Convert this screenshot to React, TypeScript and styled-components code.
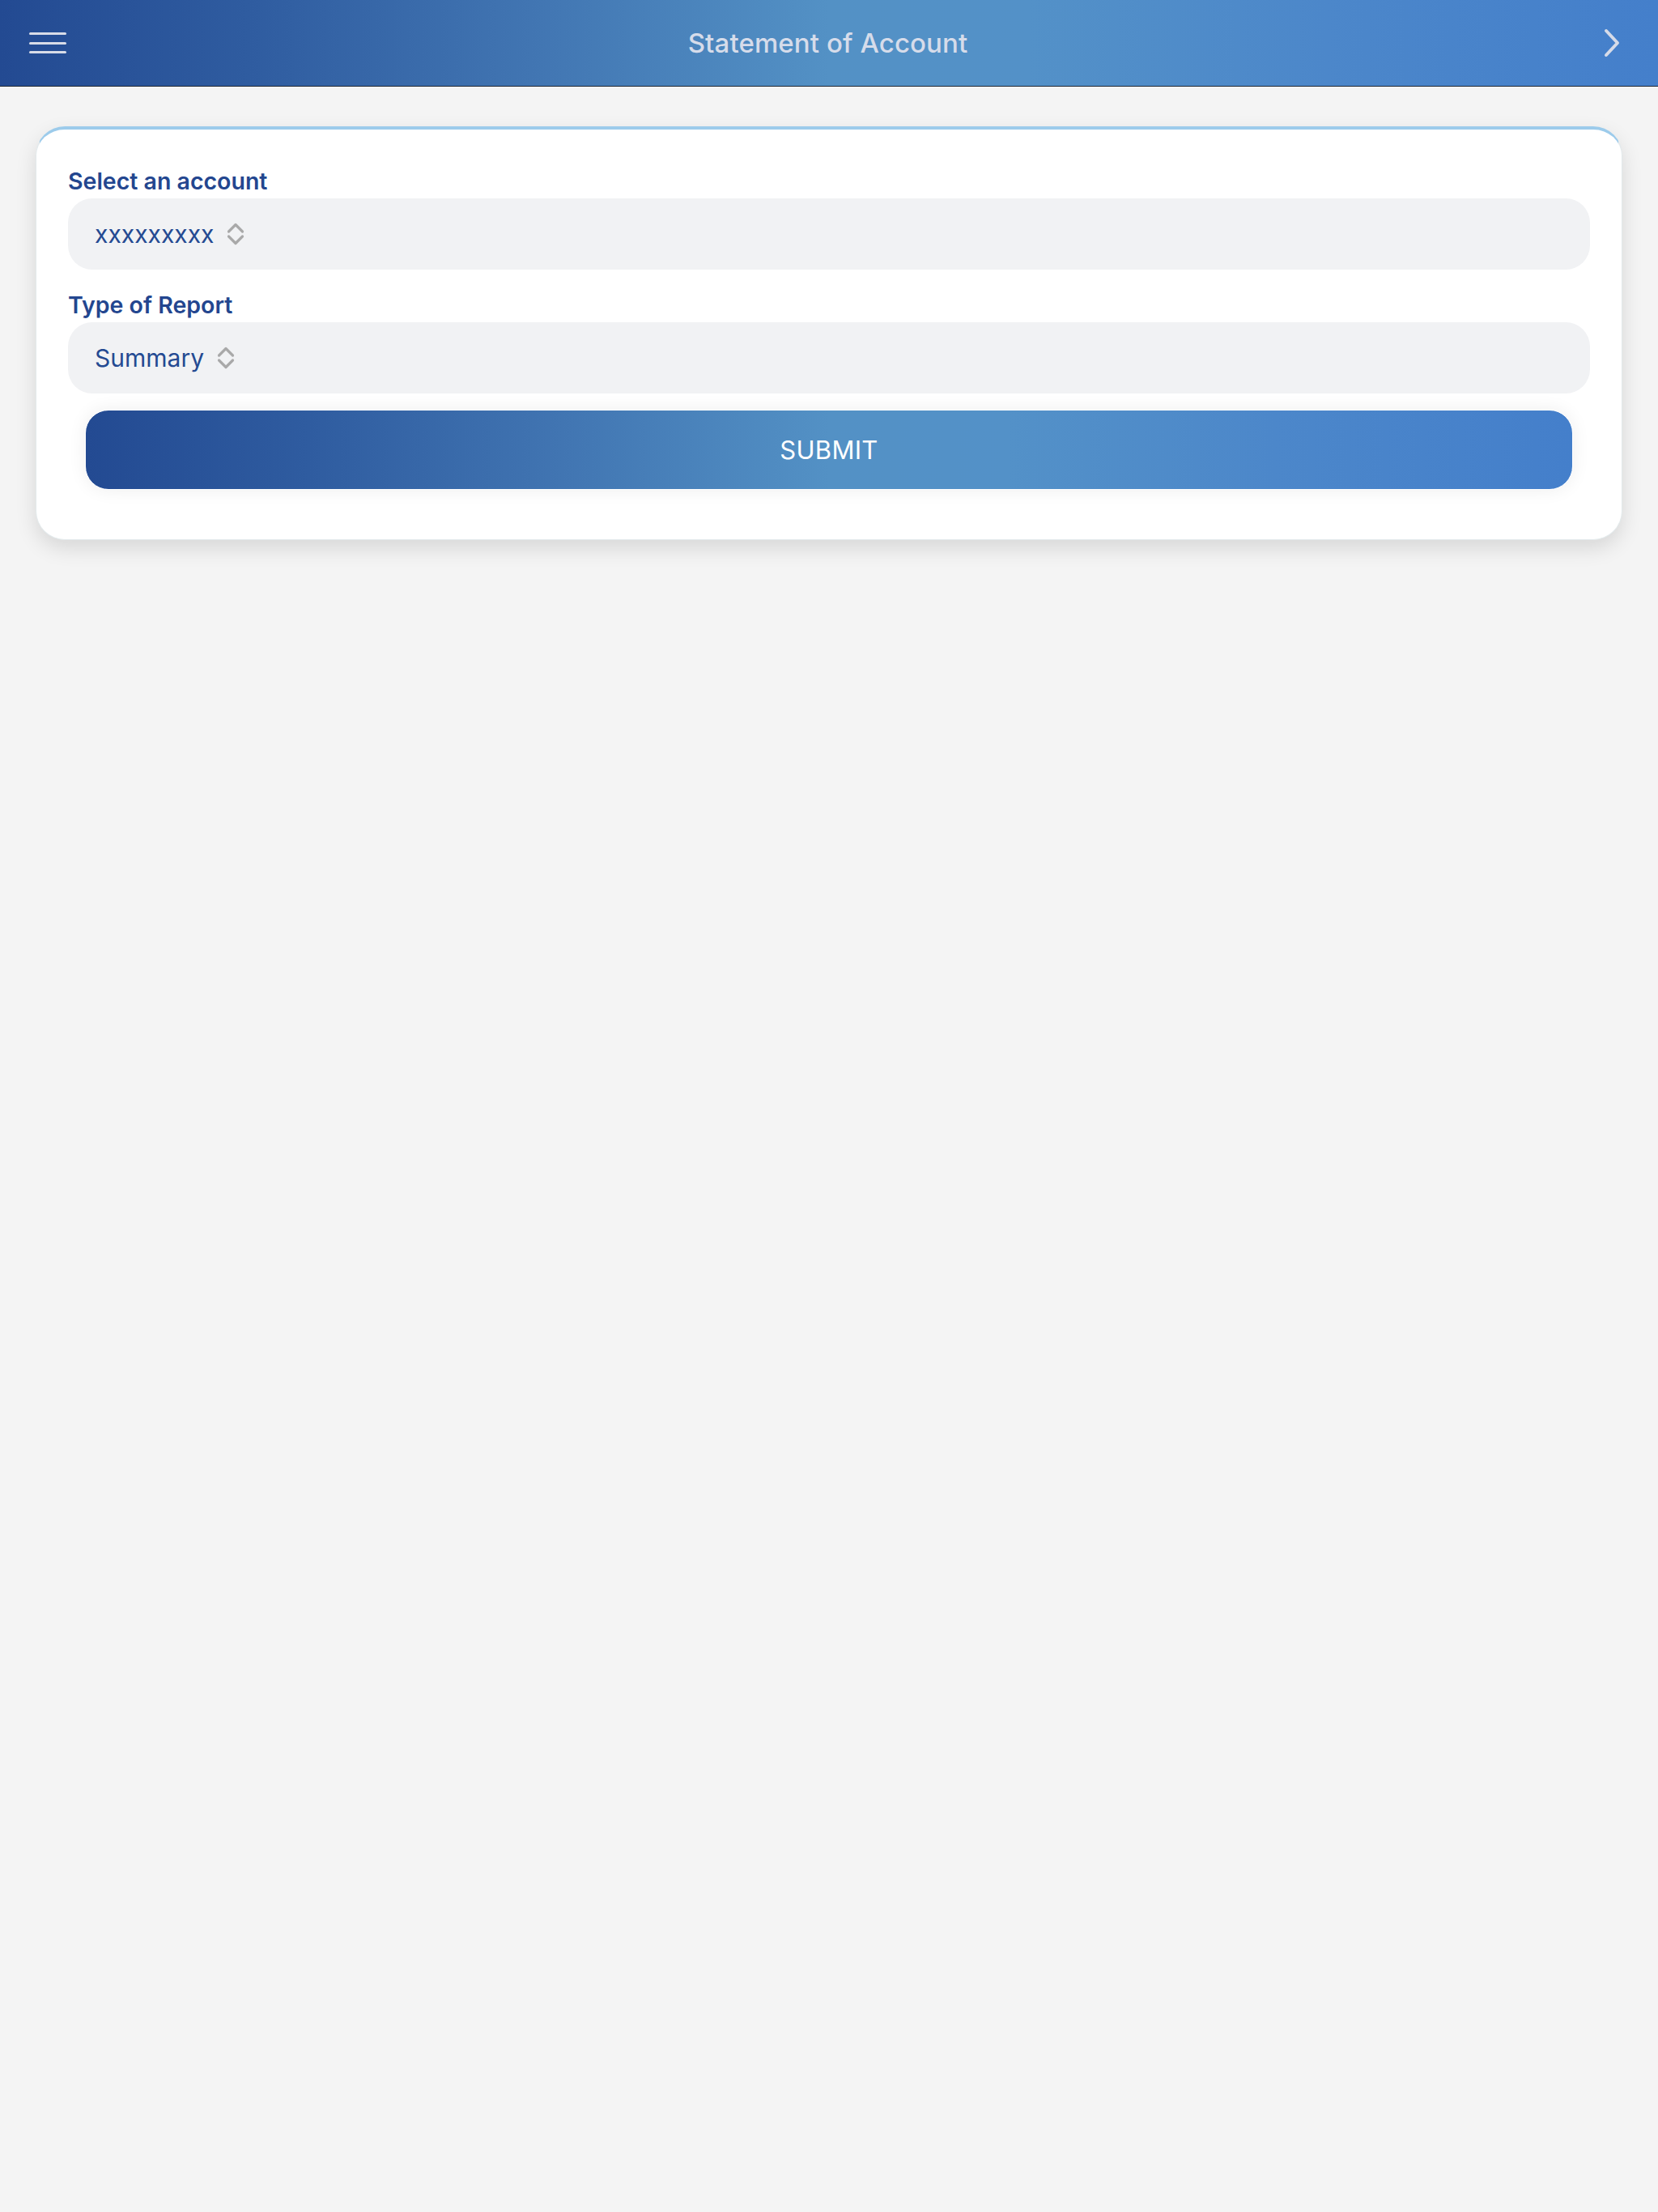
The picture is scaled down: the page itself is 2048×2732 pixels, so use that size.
import React from "react";
import styled, { createGlobalStyle } from "styled-components";

const GlobalStyle = createGlobalStyle`
  html, body {
    margin: 0;
    padding: 0;
    background: #f4f4f4;
    font-family: Inter, "Noto Sans", "Liberation Sans", sans-serif;
  }
  * { box-sizing: border-box; }
`;

const brandGradient = `linear-gradient(90deg, #234a92 0%, #2f5ca0 15%, #4175b2 32%, #5391c5 50%, #5391c8 62%, #4c87ca 80%, #447fcb 100%)`;

const Page = styled.div`
  min-height: 2732px;
  background: #f4f4f4;
`;

const Header = styled.header`
  height: 107px;
  display: grid;
  grid-template-columns: 1fr auto 1fr;
  align-items: center;
  padding: 0 45px 0 36px;
  background: ${brandGradient};
  border-bottom: 1px solid #1f2733;
`;

const MenuButton = styled.div`
  display: flex;
  flex-direction: column;
  gap: 8.5px;
  width: 46px;
  justify-self: start;
`;

const MenuLine = styled.span`
  display: block;
  height: 3px;
  border-radius: 2px;
  background: #d8dce8;
`;

const Title = styled.h1`
  margin: 0 0 0 6px;
  font-size: 33px;
  font-weight: 500;
  color: #d6dcea;
  letter-spacing: 0.1px;
`;

const NextButton = styled.div`
  justify-self: end;
  display: flex;
  align-items: center;
`;

const Content = styled.main`
  padding: 49px 44px;
`;

const Card = styled.section`
  background: #ffffff;
  border-radius: 36px;
  border-top: 4px solid #9ccbeb;
  border-left: 1px solid #e3eaec;
  border-right: 1px solid #e3eaec;
  border-bottom: 1px solid #e3eaec;
  box-shadow: 0 10px 26px rgba(0, 0, 0, 0.12);
  padding: 47px 39px 61px;
  display: flex;
  flex-direction: column;
`;

const Field = styled.div<{ $gap?: number }>`
  display: flex;
  flex-direction: column;
  gap: 4px;
  margin-top: ${(p) => p.$gap ?? 0}px;
`;

const Label = styled.label`
  font-size: 28.5px;
  line-height: 34px;
  font-weight: 600;
  color: #23468f;
`;

const SelectBox = styled.div`
  height: 88px;
  border-radius: 30px;
  background: #f1f2f4;
  display: flex;
  align-items: center;
  gap: 16px;
  padding-left: 33px;
`;

const SelectValue = styled.span`
  font-size: 30px;
  color: #244a92;
`;

const SubmitButton = styled.button`
  margin: 20px 21px 0;
  height: 99px;
  border: 1px solid #ffffff;
  border-radius: 29px;
  background: ${brandGradient};
  box-shadow: 0 0 22px rgba(0, 0, 0, 0.07);
  color: #ffffff;
  font-family: Inter, "Noto Sans", "Liberation Sans", sans-serif;
  font-size: 31px;
  font-weight: 400;
  letter-spacing: 0.3px;
`;

const UpDownIcon = () => (
  <svg width="22" height="28" viewBox="0 0 22 28" fill="none">
    <path
      d="M2.5 11 L11 2.5 L19.5 11 M2.5 17 L11 25.5 L19.5 17"
      stroke="#a9a9a9"
      strokeWidth="3.2"
      strokeLinecap="round"
      strokeLinejoin="round"
    />
  </svg>
);

const ChevronRight = () => (
  <svg width="22" height="36" viewBox="0 0 22 36" fill="none">
    <path
      d="M3 3 L17 18 L3 33"
      stroke="#d6dbe8"
      strokeWidth="4"
      strokeLinecap="round"
      strokeLinejoin="round"
    />
  </svg>
);

export default function App() {
  return (
    <>
      <GlobalStyle />
      <Page>
        <Header>
          <MenuButton>
            <MenuLine />
            <MenuLine />
            <MenuLine />
          </MenuButton>
          <Title>Statement of Account</Title>
          <NextButton>
            <ChevronRight />
          </NextButton>
        </Header>
        <Content>
          <Card>
            <Field>
              <Label>Select an account</Label>
              <SelectBox>
                <SelectValue>xxxxxxxxx</SelectValue>
                <UpDownIcon />
              </SelectBox>
            </Field>
            <Field $gap={27}>
              <Label>Type of Report</Label>
              <SelectBox>
                <SelectValue>Summary</SelectValue>
                <UpDownIcon />
              </SelectBox>
            </Field>
            <SubmitButton>SUBMIT</SubmitButton>
          </Card>
        </Content>
      </Page>
    </>
  );
}
